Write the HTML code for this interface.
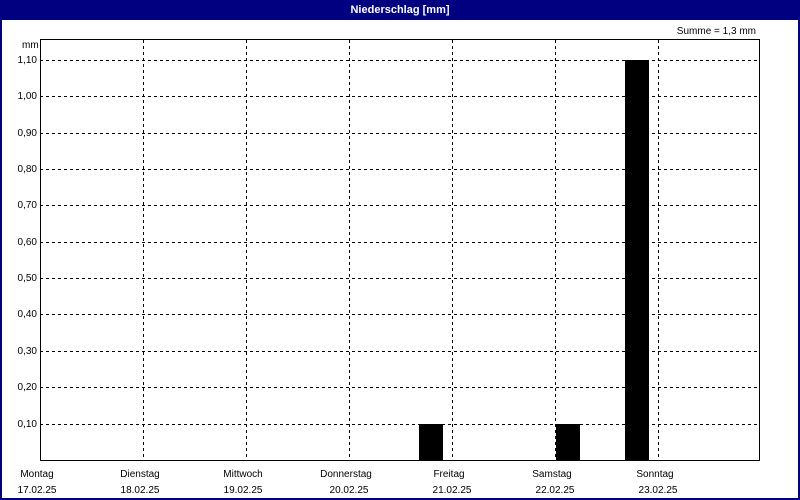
<!DOCTYPE html><html><head><style>
body{margin:0;width:800px;height:500px;overflow:hidden;font-family:"Liberation Sans",sans-serif;font-size:10px;color:#000}
.frame{position:absolute;left:0;top:0;width:796px;height:478px;border:2px solid #000080;border-top:20px solid #000080;background:#fff}
.t{position:absolute;white-space:nowrap}
</style></head><body>
<div class="frame"></div>
<div class="t" style="left:0;width:800px;top:4px;text-align:center;color:#fff;font-weight:bold;font-size:11px">Niederschlag [mm]</div>
<div class="t" style="right:44px;top:26px">Summe = 1,3 mm</div>
<div class="t" style="left:22px;top:40px">mm</div>
<svg width="800" height="500" style="position:absolute;left:0;top:0" shape-rendering="crispEdges">
<g stroke="#000" stroke-dasharray="3,3" stroke-width="1">
<line x1="143.5" y1="40" x2="143.5" y2="460"/><line x1="246.5" y1="40" x2="246.5" y2="460"/><line x1="349.5" y1="40" x2="349.5" y2="460"/><line x1="452.5" y1="40" x2="452.5" y2="460"/><line x1="555.5" y1="40" x2="555.5" y2="460"/><line x1="658.5" y1="40" x2="658.5" y2="460"/>
<line x1="40" y1="60.5" x2="760" y2="60.5"/><line x1="40" y1="96.5" x2="760" y2="96.5"/><line x1="40" y1="133.5" x2="760" y2="133.5"/><line x1="40" y1="169.5" x2="760" y2="169.5"/><line x1="40" y1="205.5" x2="760" y2="205.5"/><line x1="40" y1="242.5" x2="760" y2="242.5"/><line x1="40" y1="278.5" x2="760" y2="278.5"/><line x1="40" y1="314.5" x2="760" y2="314.5"/><line x1="40" y1="351.5" x2="760" y2="351.5"/><line x1="40" y1="387.5" x2="760" y2="387.5"/><line x1="40" y1="424.5" x2="760" y2="424.5"/>
</g>
<rect x="419" y="424" width="24" height="36" fill="#000"/>
<rect x="556" y="424" width="24" height="36" fill="#000"/>
<rect x="625" y="60" width="24" height="400" fill="#000"/>
<g stroke="#000" fill="none"><line x1="40.5" y1="39" x2="40.5" y2="461"/><line x1="759.5" y1="39" x2="759.5" y2="461"/><line x1="40" y1="460.5" x2="760" y2="460.5"/><line x1="40" y1="39.5" x2="760" y2="39.5"/></g>
</svg>
<div class="t" style="right:763px;top:55px">1,10</div>
<div class="t" style="right:763px;top:91px">1,00</div>
<div class="t" style="right:763px;top:128px">0,90</div>
<div class="t" style="right:763px;top:164px">0,80</div>
<div class="t" style="right:763px;top:200px">0,70</div>
<div class="t" style="right:763px;top:237px">0,60</div>
<div class="t" style="right:763px;top:273px">0,50</div>
<div class="t" style="right:763px;top:309px">0,40</div>
<div class="t" style="right:763px;top:346px">0,30</div>
<div class="t" style="right:763px;top:382px">0,20</div>
<div class="t" style="right:763px;top:419px">0,10</div>
<div class="t" style="left:0;width:74px;text-align:center;top:469px">Montag</div><div class="t" style="left:0;width:74px;text-align:center;top:485px">17.02.25</div>
<div class="t" style="left:100px;width:80px;text-align:center;top:469px">Dienstag</div><div class="t" style="left:100px;width:80px;text-align:center;top:485px">18.02.25</div>
<div class="t" style="left:203px;width:80px;text-align:center;top:469px">Mittwoch</div><div class="t" style="left:203px;width:80px;text-align:center;top:485px">19.02.25</div>
<div class="t" style="left:306px;width:80px;text-align:center;top:469px">Donnerstag</div><div class="t" style="left:309px;width:80px;text-align:center;top:485px">20.02.25</div>
<div class="t" style="left:409px;width:80px;text-align:center;top:469px">Freitag</div><div class="t" style="left:412px;width:80px;text-align:center;top:485px">21.02.25</div>
<div class="t" style="left:512px;width:80px;text-align:center;top:469px">Samstag</div><div class="t" style="left:515px;width:80px;text-align:center;top:485px">22.02.25</div>
<div class="t" style="left:615px;width:80px;text-align:center;top:469px">Sonntag</div><div class="t" style="left:618px;width:80px;text-align:center;top:485px">23.02.25</div>
</body></html>
